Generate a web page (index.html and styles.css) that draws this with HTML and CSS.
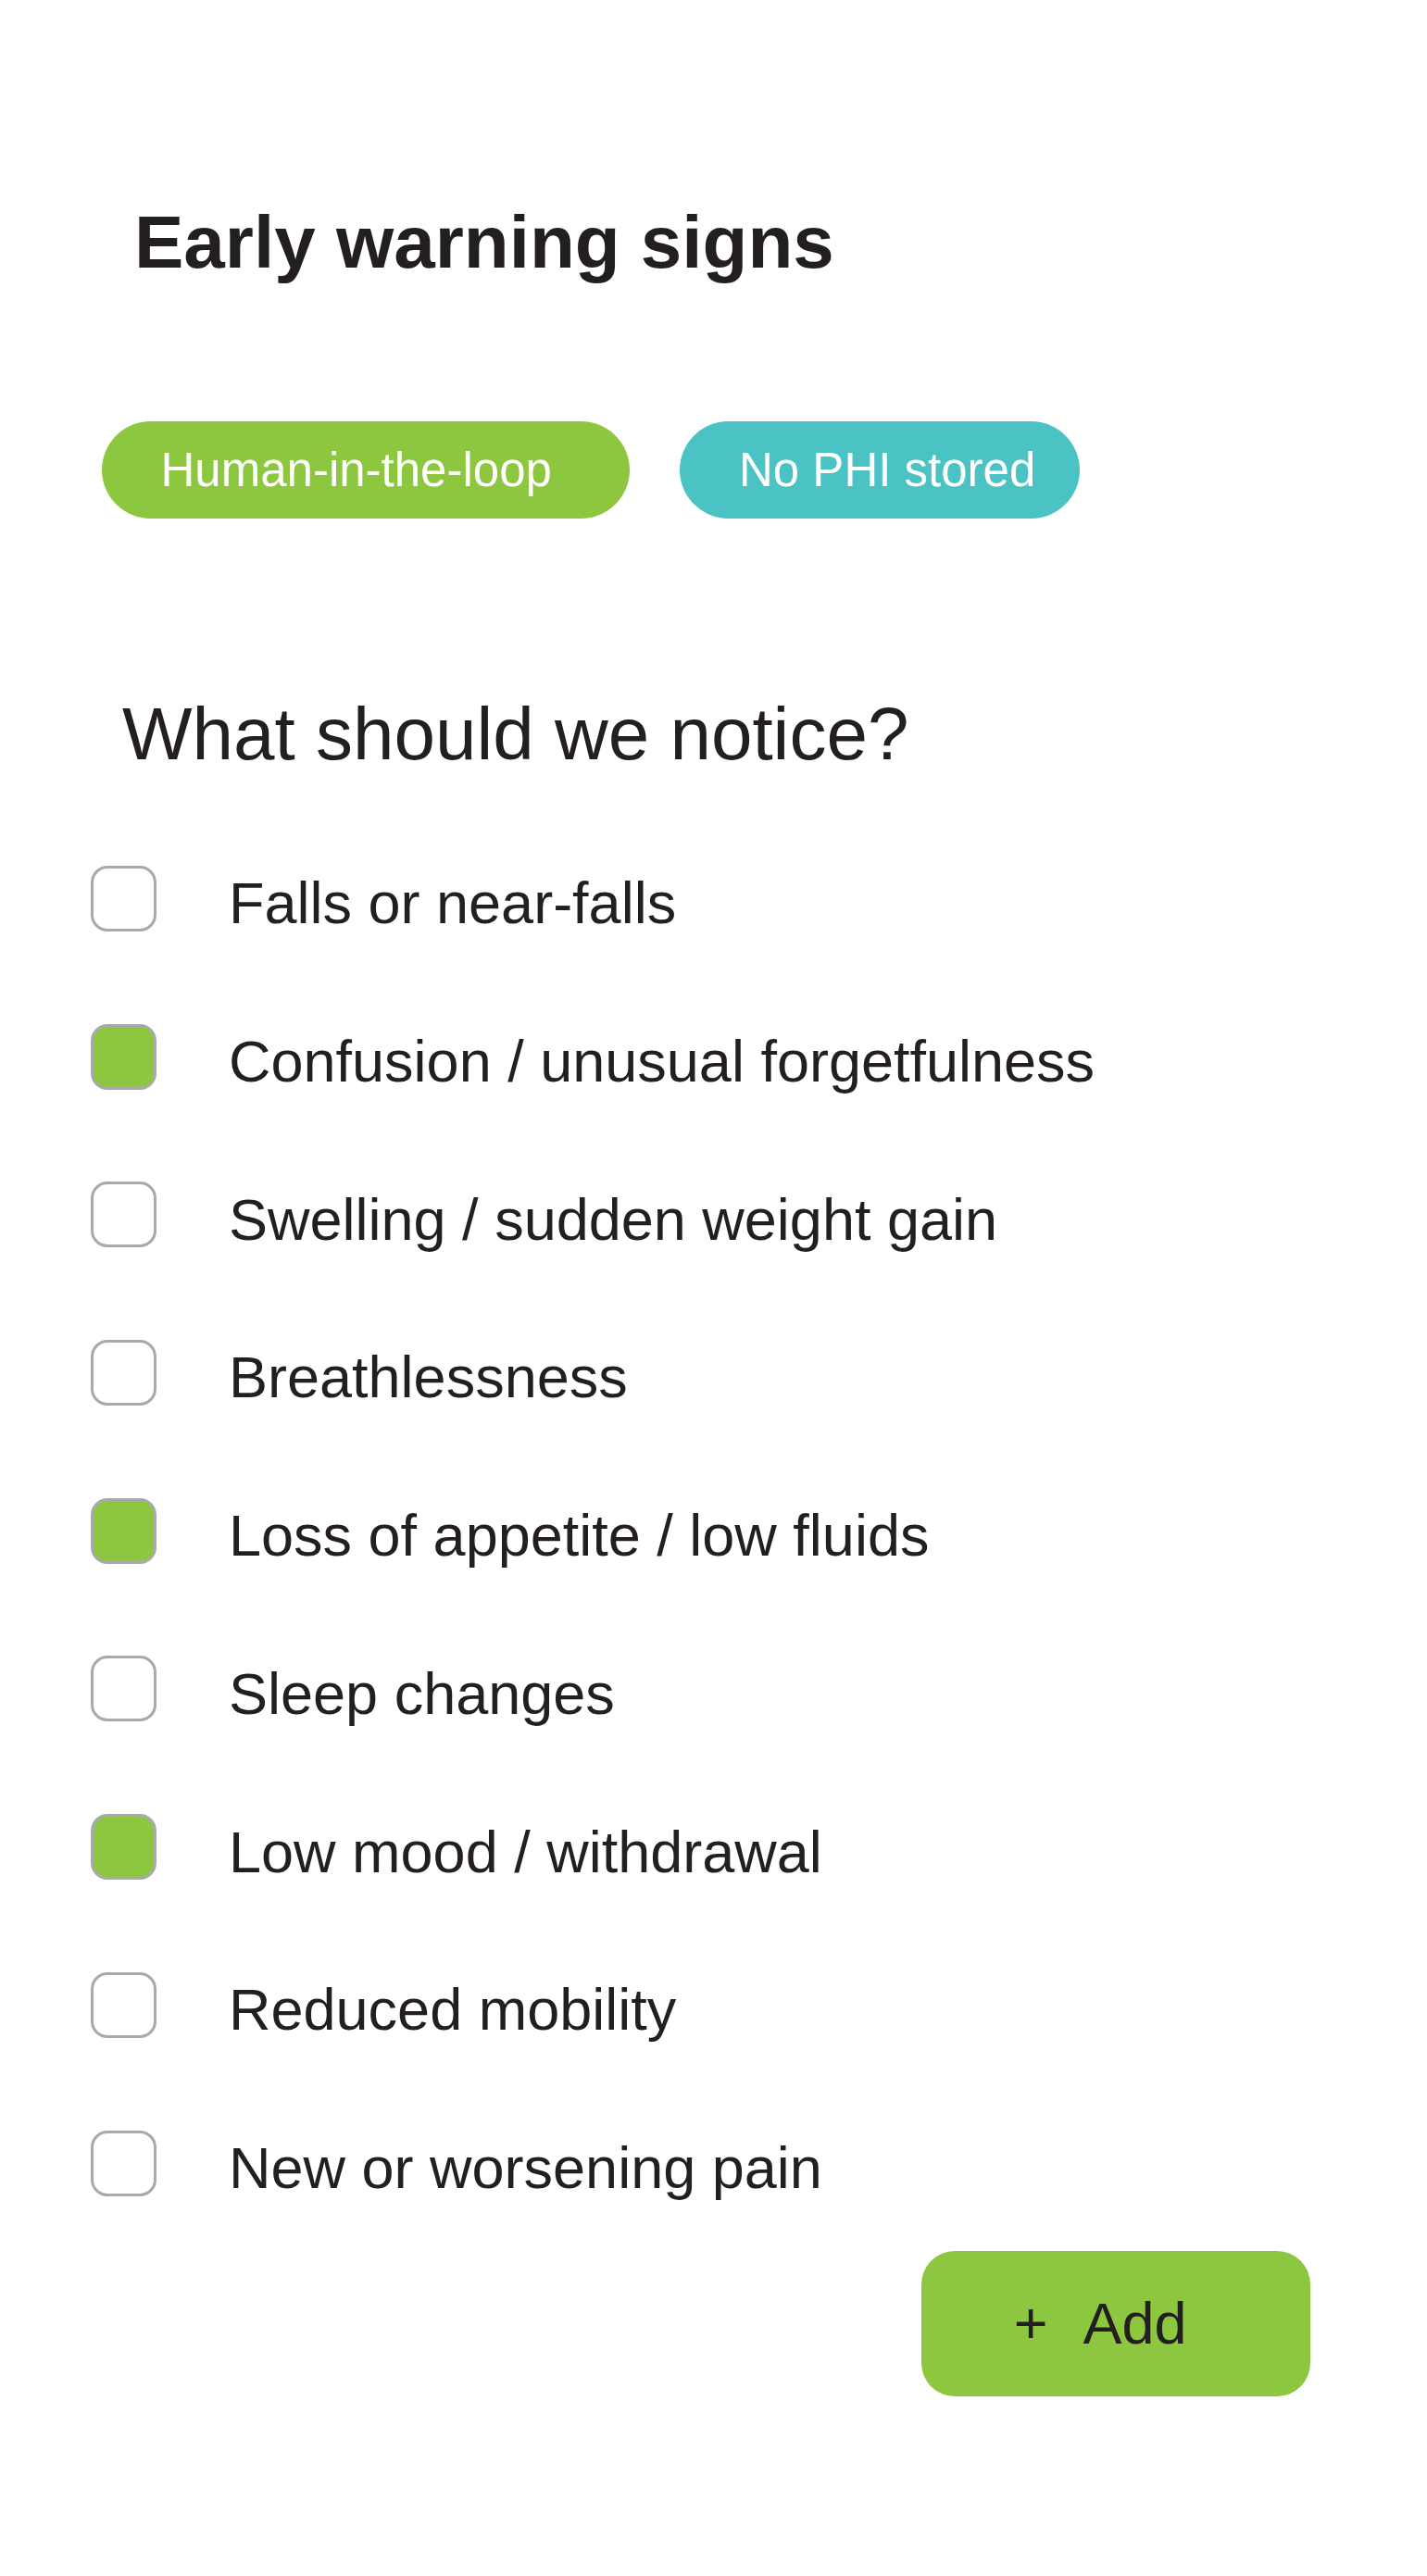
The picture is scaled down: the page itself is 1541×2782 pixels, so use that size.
FILE: index.html
```html
<!DOCTYPE html>
<html lang="en">
<head>
<meta charset="utf-8">
<title>Early warning signs</title>
<link rel="stylesheet" href="styles.css">
</head>
<body>
<main class="page">
  <h1 class="title">Early warning signs</h1>
  <div class="tags">
    <span class="tag tag-green">Human-in-the-loop</span>
    <span class="tag tag-teal">No PHI stored</span>
  </div>
  <h2 class="subtitle">What should we notice?</h2>
  <ul class="list">
    <li class="row"><span class="box"></span><span class="label">Falls or near-falls</span></li>
    <li class="row"><span class="box checked"></span><span class="label">Confusion / unusual forgetfulness</span></li>
    <li class="row"><span class="box"></span><span class="label">Swelling / sudden weight gain</span></li>
    <li class="row"><span class="box"></span><span class="label">Breathlessness</span></li>
    <li class="row"><span class="box checked"></span><span class="label">Loss of appetite / low fluids</span></li>
    <li class="row"><span class="box"></span><span class="label">Sleep changes</span></li>
    <li class="row"><span class="box checked"></span><span class="label">Low mood / withdrawal</span></li>
    <li class="row"><span class="box"></span><span class="label">Reduced mobility</span></li>
    <li class="row"><span class="box"></span><span class="label">New or worsening pain</span></li>
  </ul>
  <div class="actions">
    <button class="btn" type="button"><span class="plus">+</span><span>Add</span></button>
  </div>
</main>
</body>
</html>
```
FILE: styles.css
```css
html, body {
  margin: 0;
  padding: 0;
  background: #ffffff;
}

body {
  font-family: "Liberation Sans", Arial, Helvetica, sans-serif;
  color: #231f20;
}

.page {
  width: 1541px;
  min-height: 2782px;
  padding-top: 222px;
  box-sizing: border-box;
}

.title {
  margin: 0 0 0 145px;
  font-size: 80px;
  line-height: 80px;
  font-weight: 700;
}

.tags {
  display: flex;
  gap: 54.5px;
  margin-top: 153px;
  padding-left: 109.5px;
}

.tag {
  display: block;
  height: 105px;
  border-radius: 52.5px;
  box-sizing: border-box;
  padding-left: 64px;
  font-size: 51px;
  line-height: 105px;
  color: #ffffff;
  white-space: nowrap;
}

.tag-green {
  width: 570px;
  background: #8dc63f;
}

.tag-teal {
  width: 432px;
  background: #4bc2c3;
}

.subtitle {
  margin: 193px 0 0 132px;
  font-size: 80px;
  line-height: 80px;
  font-weight: 400;
}

.list {
  list-style: none;
  margin: 102px 0 0 0;
  padding: 0 0 0 98px;
  display: flex;
  flex-direction: column;
  gap: 99.7px;
}

.row {
  display: flex;
  align-items: flex-start;
  height: 71px;
}

.box {
  flex: none;
  width: 71px;
  height: 71px;
  box-sizing: border-box;
  border: 3px solid #a7a9ac;
  border-radius: 18px;
  background: #ffffff;
}

.box.checked {
  background: #8dc63f;
}

.label {
  margin-left: 78px;
  margin-top: 9.4px;
  font-size: 63px;
  line-height: 63px;
  white-space: nowrap;
}

.actions {
  display: flex;
  justify-content: flex-end;
  padding-right: 126px;
  margin-top: 59.4px;
}

.btn {
  display: flex;
  align-items: center;
  gap: 38px;
  width: 420px;
  height: 157px;
  box-sizing: border-box;
  padding: 0 0 0 99.7px;
  border: none;
  border-radius: 36px;
  background: #8dc63f;
  font-family: "Liberation Sans", Arial, Helvetica, sans-serif;
  font-size: 63px;
  line-height: 63px;
  color: #231f20;
}
```
